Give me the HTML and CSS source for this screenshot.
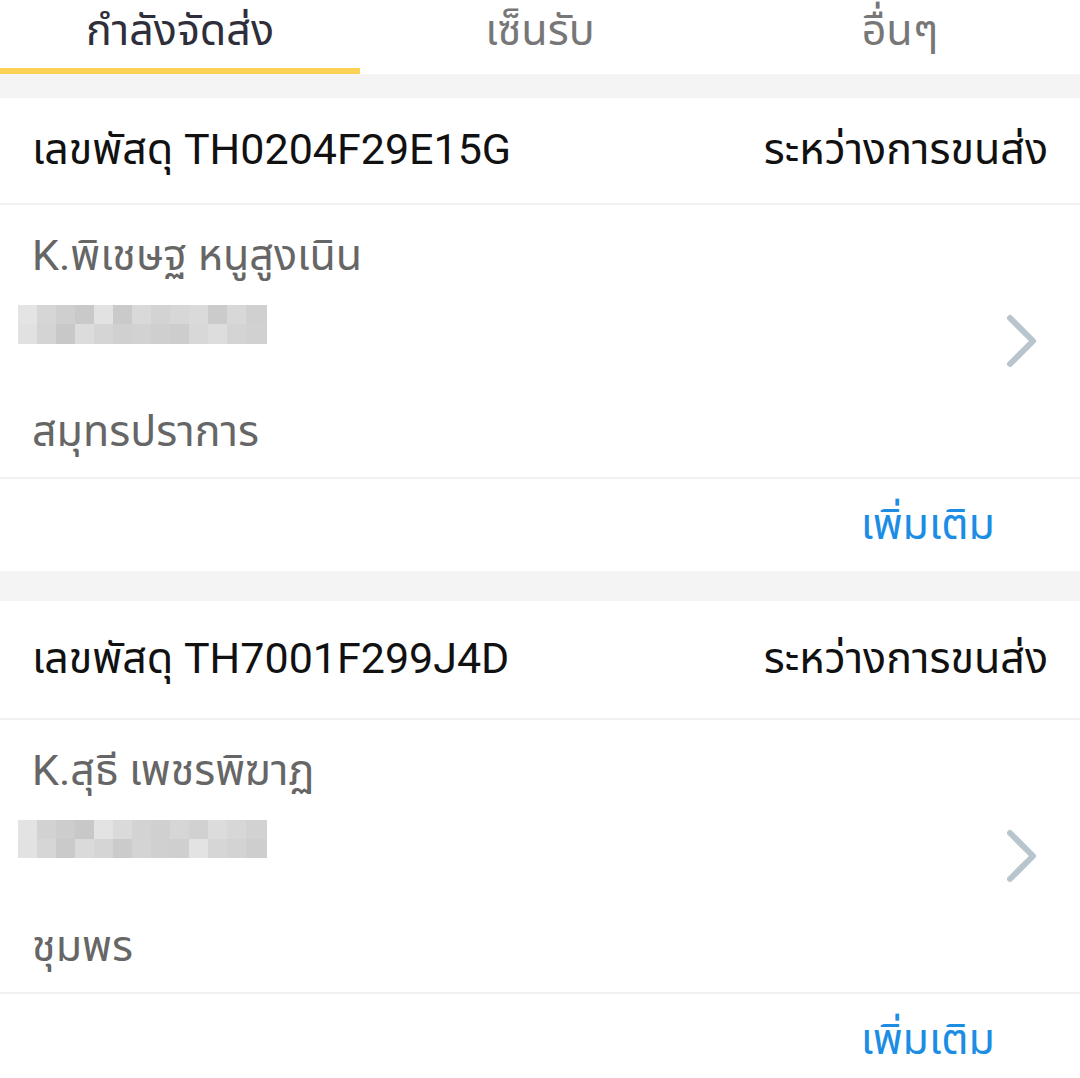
FILE: index.html
```html
<!DOCTYPE html>
<html lang="th">
<head>
    <meta charset="UTF-8">
    <title>พัสดุของฉัน</title>
    <link rel="stylesheet" href="styles.css">
</head>
<body>
<div id="app">
    <div class="tabs">
        <div class="tab active">กำลังจัดส่ง</div>
        <div class="tab">เซ็นรับ</div>
        <div class="tab">อื่นๆ</div>
    </div>

    <div class="gap first"></div>

    <!-- parcel 1 -->
    <div class="card">
        <div class="card-head">
            <span class="track">เลขพัสดุ TH0204F29E15G</span>
            <span class="status">ระหว่างการขนส่ง</span>
        </div>
        <div class="card-body">
            <div class="info">
                <div class="name">K.พิเชษฐ หนูสูงเนิน</div>
                <svg class="blur" width="270" height="52" viewBox="0 0 270 52">
                    <rect x="18" y="8" width="19" height="19" fill="#e4e4e4"/>
                    <rect x="37" y="8" width="19" height="19" fill="#d6d6d6"/>
                    <rect x="56" y="8" width="19" height="19" fill="#cfcfcf"/>
                    <rect x="75" y="8" width="19" height="19" fill="#c9c9c9"/>
                    <rect x="94" y="8" width="19" height="19" fill="#e2e2e2"/>
                    <rect x="113" y="8" width="19" height="19" fill="#cacaca"/>
                    <rect x="132" y="8" width="19" height="19" fill="#d9d9d9"/>
                    <rect x="151" y="8" width="19" height="19" fill="#d3d3d3"/>
                    <rect x="170" y="8" width="19" height="19" fill="#d7d7d7"/>
                    <rect x="189" y="8" width="19" height="19" fill="#dadada"/>
                    <rect x="208" y="8" width="19" height="19" fill="#cbcbcb"/>
                    <rect x="227" y="8" width="19" height="19" fill="#d8d8d8"/>
                    <rect x="246" y="8" width="21" height="19" fill="#d0d0d0"/>
                    <rect x="18" y="27" width="19" height="20" fill="#e1e1e1"/>
                    <rect x="37" y="27" width="19" height="20" fill="#d4d4d4"/>
                    <rect x="56" y="27" width="19" height="20" fill="#c8c8c8"/>
                    <rect x="75" y="27" width="19" height="20" fill="#dcdcdc"/>
                    <rect x="94" y="27" width="19" height="20" fill="#d5d5d5"/>
                    <rect x="113" y="27" width="19" height="20" fill="#d0d0d0"/>
                    <rect x="132" y="27" width="19" height="20" fill="#d2d2d2"/>
                    <rect x="151" y="27" width="19" height="20" fill="#cfcfcf"/>
                    <rect x="170" y="27" width="19" height="20" fill="#cdcdcd"/>
                    <rect x="189" y="27" width="19" height="20" fill="#d8d8d8"/>
                    <rect x="208" y="27" width="19" height="20" fill="#dddddd"/>
                    <rect x="227" y="27" width="19" height="20" fill="#d4d4d4"/>
                    <rect x="246" y="27" width="21" height="20" fill="#d1d1d1"/>
                </svg>
                <div class="province">สมุทรปราการ</div>
            </div>
            <svg class="chevron" width="34" height="54" viewBox="0 0 34 54">
                <path d="M5 4 L28 27 L5 50" fill="none" stroke="#b9c5cc" stroke-width="6" stroke-linecap="round" stroke-linejoin="round"/>
            </svg>
        </div>
        <div class="card-foot">
            <span class="more">เพิ่มเติม</span>
        </div>
    </div>

    <div class="gap"></div>

    <!-- parcel 2 -->
    <div class="card">
        <div class="card-head tall">
            <span class="track">เลขพัสดุ TH7001F299J4D</span>
            <span class="status">ระหว่างการขนส่ง</span>
        </div>
        <div class="card-body">
            <div class="info">
                <div class="name">K.สุธี เพชรพิฆาฏ</div>
                <svg class="blur" width="270" height="52" viewBox="0 0 270 52">
                    <rect x="18" y="8" width="19" height="19" fill="#e3e3e3"/>
                    <rect x="37" y="8" width="19" height="19" fill="#d2d2d2"/>
                    <rect x="56" y="8" width="19" height="19" fill="#cdcdcd"/>
                    <rect x="75" y="8" width="19" height="19" fill="#c8c8c8"/>
                    <rect x="94" y="8" width="19" height="19" fill="#e3e3e3"/>
                    <rect x="113" y="8" width="19" height="19" fill="#dadada"/>
                    <rect x="132" y="8" width="19" height="19" fill="#d3d3d3"/>
                    <rect x="151" y="8" width="19" height="19" fill="#d0d0d0"/>
                    <rect x="170" y="8" width="19" height="19" fill="#d6d6d6"/>
                    <rect x="189" y="8" width="19" height="19" fill="#d1d1d1"/>
                    <rect x="208" y="8" width="19" height="19" fill="#dcdcdc"/>
                    <rect x="227" y="8" width="19" height="19" fill="#d7d7d7"/>
                    <rect x="246" y="8" width="21" height="19" fill="#d2d2d2"/>
                    <rect x="18" y="27" width="19" height="19" fill="#e2e2e2"/>
                    <rect x="37" y="27" width="19" height="19" fill="#d6d6d6"/>
                    <rect x="56" y="27" width="19" height="19" fill="#cacaca"/>
                    <rect x="75" y="27" width="19" height="19" fill="#dadada"/>
                    <rect x="94" y="27" width="19" height="19" fill="#d5d5d5"/>
                    <rect x="113" y="27" width="19" height="19" fill="#cbcbcb"/>
                    <rect x="132" y="27" width="19" height="19" fill="#d4d4d4"/>
                    <rect x="151" y="27" width="19" height="19" fill="#d0d0d0"/>
                    <rect x="170" y="27" width="19" height="19" fill="#cfcfcf"/>
                    <rect x="189" y="27" width="19" height="19" fill="#e3e3e3"/>
                    <rect x="208" y="27" width="19" height="19" fill="#d6d6d6"/>
                    <rect x="227" y="27" width="19" height="19" fill="#d3d3d3"/>
                    <rect x="246" y="27" width="21" height="19" fill="#cecece"/>
                </svg>
                <div class="province">ชุมพร</div>
            </div>
            <svg class="chevron" width="34" height="54" viewBox="0 0 34 54">
                <path d="M5 4 L28 27 L5 50" fill="none" stroke="#b9c5cc" stroke-width="6" stroke-linecap="round" stroke-linejoin="round"/>
            </svg>
        </div>
        <div class="card-foot">
            <span class="more">เพิ่มเติม</span>
        </div>
    </div>
</div>
</body>
</html>
```

FILE: styles.css
```css
html, body {
    margin: 0;
    padding: 0;
    background: #f4f4f4;
    overflow: hidden;
}

#app {
    font-family: Roboto, "Noto Sans Thai", "Noto Sans", sans-serif;
    font-size: 43px;
    width: 1080px;
    height: 1078px;
    overflow: hidden;
}

/* tabs */
.tabs {
    display: flex;
    height: 74px;
    background: #fff;
}

.tab {
    flex: 1;
    text-align: center;
    line-height: 60px;
    color: #777;
    box-sizing: border-box;
    border-bottom: 6px solid transparent;
}

.tab.active {
    color: #2f2f3b;
    border-bottom-color: #fdd154;
}

.gap {
    height: 30px;
    background: #f4f4f4;
}

.gap.first {
    height: 24px;
}

/* parcel card */
.card {
    background: #fff;
}

.card-head {
    display: flex;
    justify-content: space-between;
    align-items: center;
    height: 105px;
    padding: 0 32px;
    color: #111;
    border-bottom: 2px solid #f1f1f1;
}

.card-head.tall {
    height: 117px;
}

.card-body {
    display: flex;
    align-items: center;
    height: 272px;
    padding: 0 41px 0 32px;
    border-bottom: 2px solid #f1f1f1;
}

.info {
    flex: 1;
    display: flex;
    flex-direction: column;
    height: 100%;
    color: #666;
}

.name {
    margin-top: 26px;
    line-height: 48px;
}

.blur {
    display: block;
    margin: 18px 0 0 -32px;
}

.province {
    margin-top: 58px;
    line-height: 48px;
}

.chevron {
    display: block;
}

.card-foot {
    display: flex;
    justify-content: flex-end;
    align-items: center;
    height: 92px;
    padding-right: 85px;
}

.more {
    color: #1b8de4;
}
```
